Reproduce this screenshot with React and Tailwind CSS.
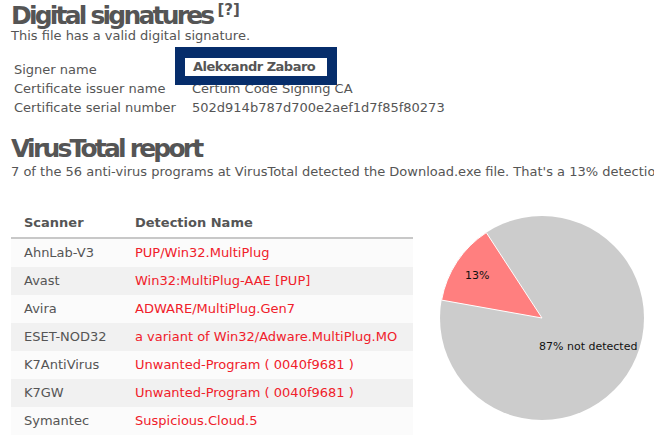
import React from "react";

const signature = [
  ["Signer name", "Alekxandr Zabaro"],
  ["Certificate issuer name", "Certum Code Signing CA"],
  ["Certificate serial number", "502d914b787d700e2aef1d7f85f80273"],
];

const detections = [
  ["AhnLab-V3", "PUP/Win32.MultiPlug"],
  ["Avast", "Win32:MultiPlug-AAE [PUP]"],
  ["Avira", "ADWARE/MultiPlug.Gen7"],
  ["ESET-NOD32", "a variant of Win32/Adware.MultiPlug.MO"],
  ["K7AntiVirus", "Unwanted-Program ( 0040f9681 )"],
  ["K7GW", "Unwanted-Program ( 0040f9681 )"],
  ["Symantec", "Suspicious.Cloud.5"],
];

// pie: 7 of 56 detected, slice starts a bit above the left horizontal
const DetectionPie = () => (
  <svg width="220" height="226" viewBox="0 0 220 226" className="block overflow-visible">
    <circle cx="110" cy="109" r="102" fill="#cccccc" />
    <path
      d="M110,109 L9.6,91.1 A102,102 0 0,1 54.3,23.6 Z"
      fill="#ff7f7f"
      stroke="#ffffff"
      strokeWidth="1"
      strokeLinejoin="round"
    />
    <text x="33" y="70" fontSize="11" fill="#111" fontFamily="'DejaVu Sans', sans-serif">
      13%
    </text>
    <text x="107" y="141" fontSize="11" fill="#111" fontFamily="'DejaVu Sans', sans-serif">
      87% not detected
    </text>
  </svg>
);

export default function App() {
  return (
    <div className="w-[654px] h-[435px] overflow-hidden bg-white pl-[11px] text-[13px] text-[#555] font-['DejaVu_Sans',sans-serif]">
      <h1 className="flex items-start pt-[4px] h-[28px] leading-[24px] whitespace-nowrap">
        <span className="text-[25px] font-bold tracking-[-2.8px]">Digital signatures</span>
        <span className="ml-[5px] -mt-[1px] text-[15px] leading-[15px] font-bold">[?]</span>
      </h1>
      <p className="leading-[16px] whitespace-nowrap">This file has a valid digital signature.</p>

      <div className="relative mt-[16px]">
        {signature.map(([label, value]) => (
          <div key={label} className="flex leading-[19px] whitespace-nowrap">
            <div className="w-[181px] pl-[3px]">{label}</div>
            <div>{value}</div>
          </div>
        ))}
        {/* highlight over the signer */}
        <div className="absolute left-[164px] top-[-13px] w-[162px] bg-[#062d6b] pt-[11px] pb-[9px] px-[10px]">
          <div className="h-[18px] bg-white pl-[8px] leading-[18px] font-bold tracking-[-0.5px] whitespace-nowrap">
            Alekxandr Zabaro
          </div>
        </div>
      </div>

      <h2 className="mt-[20px] text-[25px] leading-[24px] font-bold tracking-[-2.8px] whitespace-nowrap">
        VirusTotal report
      </h2>
      <p className="mt-[3px] leading-[16px] whitespace-nowrap">
        7 of the 56 anti-virus programs at VirusTotal detected the Download.exe file. That's a 13% detection rate.
      </p>

      <div className="mt-[29px] flex items-start">
        <div className="w-[402px]">
          <div className="flex h-[30px] leading-[28px] font-bold border-b-2 border-[#c8c8c8]">
            <div className="w-[124px] pl-[13px]">Scanner</div>
            <div>Detection Name</div>
          </div>
          {detections.map(([scanner, name], i) => (
            <div
              key={scanner}
              className={
                "flex h-[28px] leading-[28px] whitespace-nowrap " +
                (i % 2 === 1 ? "bg-[#f1f1f1]" : "bg-[#fbfbfb]")
              }
            >
              <div className="w-[124px] pl-[13px]">{scanner}</div>
              <div className="text-[#f0202a]">{name}</div>
            </div>
          ))}
        </div>
        <div className="ml-[19px]">
          <DetectionPie />
        </div>
      </div>
    </div>
  );
}
